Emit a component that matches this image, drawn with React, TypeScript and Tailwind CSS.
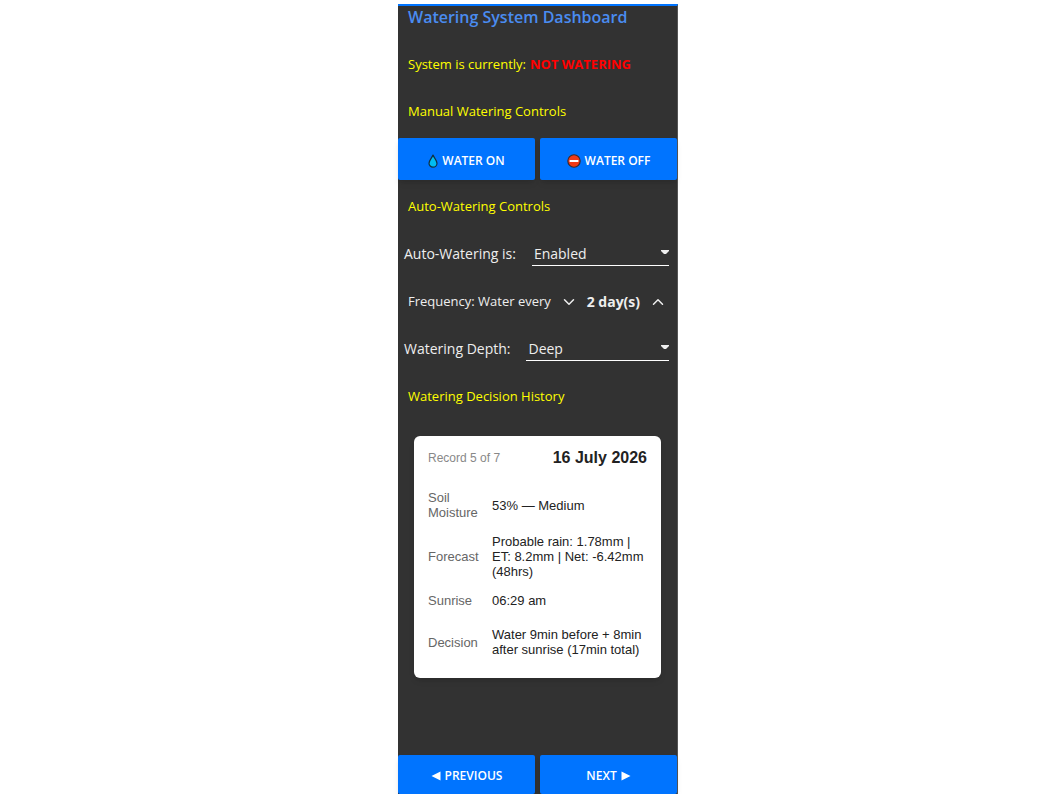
import { useState } from 'react';
import type { ReactNode } from 'react';
import { ChevronDown, ChevronUp } from 'lucide-react';

interface HistoryRow {
  label: string;
  value: string;
}

const history: HistoryRow[] = [
  { label: 'Soil Moisture', value: '53% — Medium' },
  { label: 'Forecast', value: 'Probable rain: 1.78mm | ET: 8.2mm | Net: -6.42mm (48hrs)' },
  { label: 'Sunrise', value: '06:29 am' },
  { label: 'Decision', value: 'Water 9min before + 8min after sunrise (17min total)' }
];

function DropIcon() {
  return (
    <svg className="w-2.5 h-3.5" viewBox="0 0 10 14" aria-hidden="true">
      <path
        d="M5 1C4 3.8 1 6.4 1 9.2a4 4 0 0 0 8 0C9 6.4 6 3.8 5 1z"
        fill="#00bcf2"
        stroke="#12303f"
        strokeWidth="1.2"
        strokeLinejoin="round"
      />
    </svg>
  );
}

function NoEntryIcon() {
  return (
    <svg className="w-3.5 h-3.5" viewBox="0 0 14 14" aria-hidden="true">
      <circle cx="7" cy="7" r="6.2" fill="#f03a17" stroke="#3b2a2a" strokeWidth="1.1" />
      <rect x="2.6" y="6" width="8.8" height="2" fill="#fff" />
    </svg>
  );
}

function TriangleIcon({ direction }: { direction: 'left' | 'right' }) {
  return (
    <svg className="w-2.5 h-2.5" viewBox="0 0 10 10" aria-hidden="true">
      <path d={direction === 'left' ? 'M9.5 0.5v9L0.5 5z' : 'M0.5 0.5v9L9.5 5z'} fill="currentColor" />
    </svg>
  );
}

function SectionTitle({ children }: { children: ReactNode }) {
  return <h2 className="h-[41px] px-2.5 flex items-center text-[13px] font-medium text-[#ff0]">{children}</h2>;
}

interface SelectRowProps {
  id: string;
  label: string;
  value: string;
  options: string[];
  onChange: (value: string) => void;
}

function SelectRow({ id, label, value, options, onChange }: SelectRowProps) {
  return (
    <div className="h-[42px] pl-1.5 pr-2 flex items-center gap-4">
      <label htmlFor={id} className="whitespace-nowrap">{label}</label>
      <div className="relative flex-1">
        <select
          id={id}
          value={value}
          onChange={(e) => onChange(e.target.value)}
          className="w-full h-6 appearance-none bg-transparent border-b border-white pl-0.5 leading-5 outline-none"
        >
          {options.map((option) => (
            <option key={option} className="text-black">{option}</option>
          ))}
        </select>
        <svg className="absolute right-0 top-2 w-2 h-1 pointer-events-none" viewBox="0 0 8 4" aria-hidden="true">
          <path d="M0 0h8v1L5 4H3L0 1z" fill="currentColor" />
        </svg>
      </div>
    </div>
  );
}

const buttonStyle =
  'flex-1 flex items-center justify-center gap-1 pt-[3px] rounded-xs bg-[#0074ff] text-white text-xs font-semibold shadow-md hover:bg-[#0066e0]';

export default function App() {
  const [watering, setWatering] = useState(false);
  const [mode, setMode] = useState('Enabled');
  const [days, setDays] = useState(2);
  const [depth, setDepth] = useState('Deep');
  const [record, setRecord] = useState(5);

  return (
    <div className="min-h-screen bg-white flex justify-center pt-1 pl-[18px]">
      <main className="w-full max-w-[280px] flex flex-col bg-[#323232] border-t-2 border-t-[#0074ff] border-r border-r-[#555] font-['Open_Sans',sans-serif] text-sm text-[#eee]">
        <h1 className="h-[22px] mb-4 px-2.5 flex items-center text-base font-semibold text-[#4a8cf0]">
          Watering System Dashboard
        </h1>

        <div className="flex flex-col gap-1.5">
          <p className="h-[41px] px-2.5 flex items-center gap-1 text-[13px] font-medium text-[#ff0]">
            System is currently:
            <strong className="font-bold text-[#f00]">{watering ? 'WATERING' : 'NOT WATERING'}</strong>
          </p>

          <SectionTitle>Manual Watering Controls</SectionTitle>
          <div className="flex gap-[5px]">
            <button type="button" className={`${buttonStyle} h-[42px]`} onClick={() => setWatering(true)}>
              <DropIcon />
              WATER ON
            </button>
            <button type="button" className={`${buttonStyle} h-[42px]`} onClick={() => setWatering(false)}>
              <NoEntryIcon />
              WATER OFF
            </button>
          </div>

          <SectionTitle>Auto-Watering Controls</SectionTitle>
          <SelectRow
            id="auto-watering"
            label="Auto-Watering is:"
            value={mode}
            options={['Enabled', 'Disabled']}
            onChange={setMode}
          />
          <div className="h-[41px] px-2.5 flex items-center justify-between">
            <span className="text-[13px]">Frequency: Water every</span>
            <button type="button" aria-label="Fewer days" onClick={() => setDays(Math.max(1, days - 1))}>
              <ChevronDown className="w-[18px] h-[18px]" />
            </button>
            <span className="font-bold">{days} day(s)</span>
            <button type="button" aria-label="More days" onClick={() => setDays(days + 1)}>
              <ChevronUp className="w-[18px] h-[18px]" />
            </button>
          </div>
          <SelectRow
            id="watering-depth"
            label="Watering Depth:"
            value={depth}
            options={['Shallow', 'Medium', 'Deep']}
            onChange={setDepth}
          />

          <SectionTitle>Watering Decision History</SectionTitle>
        </div>

        {/* Decision record */}
        <section className="mt-[19px] mx-4 mb-6 px-3.5 pt-2.5 pb-3.5 rounded-md bg-white font-['Liberation_Sans',sans-serif] text-[#222] shadow-md">
          <div className="flex items-center justify-between h-6 mb-[13px]">
            <span className="text-xs text-[#888]">Record {record} of 7</span>
            <h3 className="text-base font-bold">16 July 2026</h3>
          </div>
          <table className="w-full text-[13px] leading-[15px]">
            <tbody>
              {history.map((row) => (
                <tr key={row.label} className="last:*:pt-3">
                  <th scope="row" className="w-16 py-[7px] pr-3 text-left font-normal text-[#666]">{row.label}</th>
                  <td className="py-[7px]">{row.value}</td>
                </tr>
              ))}
            </tbody>
          </table>
        </section>

        <nav className="mt-auto flex gap-[5px]">
          <button
            type="button"
            className={`${buttonStyle} h-[39px]`}
            onClick={() => setRecord(Math.max(1, record - 1))}
          >
            <TriangleIcon direction="left" />
            PREVIOUS
          </button>
          <button
            type="button"
            className={`${buttonStyle} h-[39px]`}
            onClick={() => setRecord(Math.min(7, record + 1))}
          >
            NEXT
            <TriangleIcon direction="right" />
          </button>
        </nav>
      </main>
    </div>
  );
}
